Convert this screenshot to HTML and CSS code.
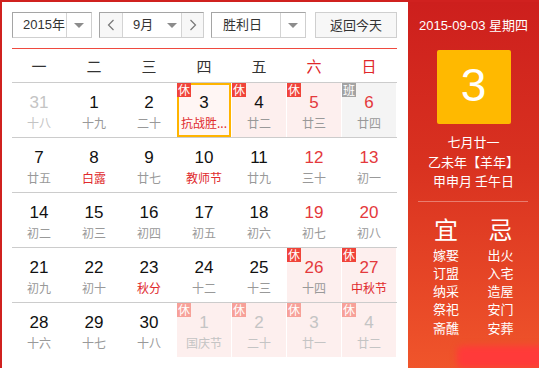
FILE: index.html
```html
<!DOCTYPE html>
<html lang="zh">
<head>
<meta charset="utf-8">
<link rel="stylesheet" href="styles.css">
</head>
<body>
<div class="cal">
  <div class="main">
    <div class="toolbar">
      <div class="sel sel-year"><span class="sel-text">2015年</span><span class="sel-arrow"><i class="tri"></i></span></div>
      <div class="sel sel-month">
        <span class="nav"><svg width="8" height="12" viewBox="0 0 8 12"><polyline points="6.5,1 1.5,6 6.5,11" fill="none" stroke="#777" stroke-width="1.2"/></svg></span>
        <span class="month-text">9月<i class="tri"></i></span>
        <span class="nav nav-next"><svg width="8" height="12" viewBox="0 0 8 12"><polyline points="1.5,1 6.5,6 1.5,11" fill="none" stroke="#777" stroke-width="1.2"/></svg></span>
      </div>
      <div class="sel sel-hol"><span class="sel-text">胜利日</span><span class="sel-arrow"><i class="tri"></i></span></div>
      <div class="btn-today">返回今天</div>
    </div>
    <div class="week">
      <span>一</span><span>二</span><span>三</span><span>四</span><span>五</span><span class="we">六</span><span class="we">日</span>
    </div>
    <div class="row">
      <div class="cell out"><b>31</b><em>十八</em></div>
      <div class="cell"><b>1</b><em>十九</em></div>
      <div class="cell"><b>2</b><em>二十</em></div>
      <div class="cell today"><span class="badge">休</span><b>3</b><em class="fest">抗战胜...</em></div>
      <div class="cell rest"><span class="badge">休</span><b>4</b><em>廿二</em></div>
      <div class="cell rest we"><span class="badge">休</span><b>5</b><em>廿三</em></div>
      <div class="cell work we"><span class="badge gray">班</span><b>6</b><em>廿四</em></div>
    </div>
    <div class="row">
      <div class="cell"><b>7</b><em>廿五</em></div>
      <div class="cell"><b>8</b><em class="fest">白露</em></div>
      <div class="cell"><b>9</b><em>廿七</em></div>
      <div class="cell"><b>10</b><em class="fest">教师节</em></div>
      <div class="cell"><b>11</b><em>廿九</em></div>
      <div class="cell we"><b>12</b><em>三十</em></div>
      <div class="cell we"><b>13</b><em>初一</em></div>
    </div>
    <div class="row">
      <div class="cell"><b>14</b><em>初二</em></div>
      <div class="cell"><b>15</b><em>初三</em></div>
      <div class="cell"><b>16</b><em>初四</em></div>
      <div class="cell"><b>17</b><em>初五</em></div>
      <div class="cell"><b>18</b><em>初六</em></div>
      <div class="cell we"><b>19</b><em>初七</em></div>
      <div class="cell we"><b>20</b><em>初八</em></div>
    </div>
    <div class="row">
      <div class="cell"><b>21</b><em>初九</em></div>
      <div class="cell"><b>22</b><em>初十</em></div>
      <div class="cell"><b>23</b><em class="fest">秋分</em></div>
      <div class="cell"><b>24</b><em>十二</em></div>
      <div class="cell"><b>25</b><em>十三</em></div>
      <div class="cell rest we"><span class="badge">休</span><b>26</b><em>十四</em></div>
      <div class="cell rest we"><span class="badge">休</span><b>27</b><em class="fest">中秋节</em></div>
    </div>
    <div class="row">
      <div class="cell"><b>28</b><em>十六</em></div>
      <div class="cell"><b>29</b><em>十七</em></div>
      <div class="cell"><b>30</b><em>十八</em></div>
      <div class="cell rest out"><span class="badge faded">休</span><b>1</b><em>国庆节</em></div>
      <div class="cell rest out"><span class="badge faded">休</span><b>2</b><em>二十</em></div>
      <div class="cell rest out"><span class="badge faded">休</span><b>3</b><em>廿一</em></div>
      <div class="cell rest out"><span class="badge faded">休</span><b>4</b><em>廿二</em></div>
    </div>
  </div>
  <div class="side">
    <div class="side-date">2015-09-03 星期四</div>
    <div class="big-day">3</div>
    <div class="lunar">
      <div>七月廿一</div>
      <div>乙未年【羊年】</div>
      <div>甲申月 壬午日</div>
    </div>
    <div class="divider"></div>
    <div class="yiji">
      <div class="yj-col">
        <div class="yj-head">宜</div>
        <div>嫁娶</div><div>订盟</div><div>纳采</div><div>祭祀</div><div>斋醮</div>
      </div>
      <div class="yj-col">
        <div class="yj-head">忌</div>
        <div>出火</div><div>入宅</div><div>造屋</div><div>安门</div><div>安葬</div>
      </div>
    </div>
    <div class="blob"></div>
  </div>
</div>
</body>
</html>
```

FILE: styles.css
```css
* { box-sizing: border-box; }
html, body { margin: 0; padding: 0; background: #fff; }
body {
  font-family: "Liberation Sans", "Noto Sans CJK SC", sans-serif;
  color: #333;
}
.cal {
  width: 539px;
  height: 368px;
  border-top: 2px solid #d0211f;
  border-left: 2px solid #d0211f;
  display: flex;
  overflow: hidden;
}
.main {
  width: 406px;
  padding: 10px 11px 0 10px;
  background: #fff;
}
.toolbar {
  display: flex;
  height: 26px;
  font-size: 13px;
  color: #333;
}
.sel {
  display: flex;
  height: 26px;
  border: 1px solid;
  border-color: #a5a5a5 #cfcfcf #cfcfcf #a5a5a5;
  background: #fff;
}
.sel-text {
  flex: 1;
  line-height: 24px;
  padding-left: 10px;
}
.sel-arrow {
  width: 25px;
  border-left: 1px solid #d4d4d4;
  display: flex;
  align-items: center;
  justify-content: center;
}
.tri {
  display: inline-block;
  width: 0; height: 0;
  border-left: 5px solid transparent;
  border-right: 5px solid transparent;
  border-top: 5px solid #8c8c8c;
}
.sel-year { width: 80px; }
.sel-month { width: 105px; margin-left: 7px; }
.sel-hol { width: 95px; margin-left: 7px; }
.sel-hol .sel-text { padding-left: 11px; }
.nav {
  width: 22px;
  background: #f7f7f7;
  display: flex;
  align-items: center;
  justify-content: center;
}
.nav-next { border-left: 1px solid #d4d4d4; }
.month-text {
  flex: 1;
  border-left: 1px solid #d4d4d4;
  line-height: 24px;
  padding-left: 10px;
  display: flex;
  align-items: center;
}
.month-text .tri { margin-left: 14px; }
.btn-today {
  width: 82px;
  height: 26px;
  margin-left: 9px;
  border: 1px solid #cfcfcf;
  background: #f7f7f7;
  text-align: center;
  line-height: 24px;
  font-family: "Noto Sans CJK SC", sans-serif;
}
.week {
  margin-top: 10px;
  border-top: 1px solid #ef4a3f;
  display: grid;
  grid-template-columns: repeat(7, 55px);
  height: 34px;
  font-size: 15px;
  font-family: "Noto Sans CJK SC", sans-serif;
  color: #333;
}
.week span {
  width: 54px;
  text-align: center;
  line-height: 33px;
}
.week .we { color: #e0262a; }
.row {
  border-top: 1px solid #cccccc;
  display: grid;
  grid-template-columns: repeat(7, 55px);
  height: 55px;
}
.cell {
  position: relative;
  width: 54px;
  height: 54px;
  text-align: center;
  padding-top: 9px;
}
.cell b {
  display: block;
  font-weight: normal;
  font-size: 17px;
  line-height: 21px;
  color: #111;
}
.cell em {
  display: block;
  font-style: normal;
  font-size: 12px;
  line-height: 20px;
  color: #999;
  font-family: "Noto Sans CJK SC", sans-serif;
  white-space: nowrap;
  overflow: hidden;
}
.cell em.fest { color: #e02a2d; }
.cell.we b { color: #e4393c; }
.cell.rest { background: #fdefee; }
.cell.work { background: #f4f4f4; }
.cell.out b, .cell.out em { color: #c4c4c4; }
.cell.today {
  border: 2px solid #ffb400;
  background: #fff6f4;
  padding-top: 7px;
}
.badge {
  position: absolute;
  left: 0;
  top: 0;
  width: 14px;
  height: 14px;
  background: #f0443a;
  color: #fff;
  font-size: 12px;
  line-height: 14px;
  text-align: center;
  font-family: "Noto Sans CJK SC", sans-serif;
}
.cell.today .badge { left: -2px; top: -2px; }
.badge.gray { background: #a3a3a3; }
.badge.faded { background: #f7a199; }
.side {
  width: 131px;
  background: linear-gradient(#cd1f1d, #d93220 45%, #f0552b);
  color: #fff;
  padding-top: 14px;
  font-family: "Noto Sans CJK SC", sans-serif;
}
.side-date {
  text-align: center;
  font-size: 13px;
  line-height: 20px;
  font-family: "Liberation Sans", "Noto Sans CJK SC", sans-serif;
}
.big-day {
  width: 74px;
  height: 74px;
  margin: 14px auto 0;
  background: #ffb900;
  border-radius: 2px;
  text-align: center;
  font-size: 46px;
  line-height: 70px;
  font-family: "Liberation Sans", sans-serif;
  color: #fff;
}
.lunar {
  margin-top: 8px;
  text-align: center;
  font-size: 13px;
  line-height: 19.5px;
}
.divider {
  margin: 10px 11px 0 10px;
  height: 1px;
  background: rgba(255, 255, 255, 0.35);
}
.yiji {
  display: grid;
  grid-template-columns: 54px 55px;
  padding-left: 11px;
  margin-top: 12px;
  font-size: 13px;
  line-height: 18.3px;
  text-align: center;
}
.yj-head {
  font-size: 24px;
  line-height: 30px;
  margin-bottom: 2px;
}
.blob {
  margin: 9px 0 0 49px;
  width: 90px;
  height: 22px;
  background: #ff3a3a;
  border-radius: 6px;
  filter: blur(3px);
}
```
